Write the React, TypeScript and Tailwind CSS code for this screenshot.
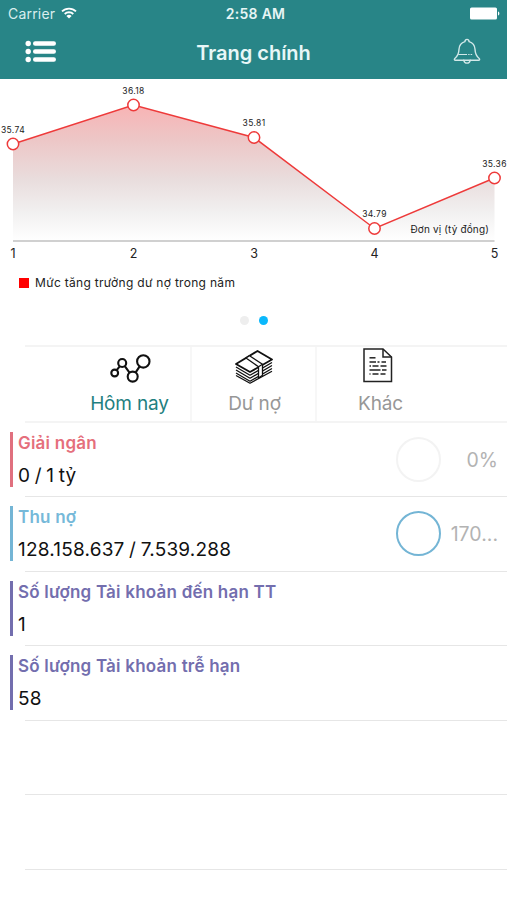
import type { ReactNode } from 'react';
import { clsx } from 'clsx';

const POINTS = [
  { x: 13, y: 65, label: '35.74' },
  { x: 133.5, y: 26, label: '36.18' },
  { x: 254, y: 58.5, label: '35.81' },
  { x: 374.5, y: 149.5, label: '34.79' },
  { x: 494.5, y: 99, label: '35.36' }
];

const BASELINE = 162;

type Row = {
  title: string;
  value: string;
  text: string;
  bar: string;
  ring?: string;
  percent?: string;
};

const ROWS: Row[] = [
  {
    title: 'Giải ngân',
    value: '0 / 1 tỷ',
    text: 'text-[#e56f7c]',
    bar: 'bg-[#e0707e]',
    ring: 'border-[#f3f3f3]',
    percent: '0%'
  },
  {
    title: 'Thu nợ',
    value: '128.158.637 / 7.539.288',
    text: 'text-[#76b9d9]',
    bar: 'bg-[#74b5d5]',
    ring: 'border-[#74b5d5]',
    percent: '170...'
  },
  {
    title: 'Số lượng Tài khoản đến hạn TT',
    value: '1',
    text: 'text-[#736eae]',
    bar: 'bg-[#736eae]'
  },
  {
    title: 'Số lượng Tài khoản trễ hạn',
    value: '58',
    text: 'text-[#736eae]',
    bar: 'bg-[#736eae]'
  }
];

function WifiIcon() {
  return (
    <svg width="16" height="12" viewBox="0 0 16 12" fill="none" stroke="white" strokeWidth="1.8" className="mb-[3px]">
      <path d="M1 4.4a10 10 0 0 1 14 0" />
      <path d="M3.7 7a6.2 6.2 0 0 1 8.6 0" />
      <path d="M8 11.5 5.4 8.9a3.8 3.8 0 0 1 5.2 0z" fill="white" stroke="none" />
    </svg>
  );
}

function BatteryIcon() {
  return (
    <svg width="30" height="13" viewBox="0 0 30 13" fill="white" className="mb-[2px]">
      <rect x="0" y="0.5" width="27" height="12" rx="1.6" />
      <path d="M28 4.5c1.8.4 1.8 3.6 0 4z" />
    </svg>
  );
}

function MenuIcon() {
  return (
    <svg width="32" height="24" viewBox="0 0 32 24" fill="white">
      {[3.5, 11.5, 19.5].map((y) => (
        <g key={y}>
          <circle cx="3.2" cy={y} r="2.7" />
          <rect x="8" y={y - 2.2} width="23" height="4.4" rx="2.2" />
        </g>
      ))}
    </svg>
  );
}

function BellIcon() {
  return (
    <svg
      width="28"
      height="27"
      viewBox="0 0 28 27"
      fill="none"
      stroke="#d3e9e9"
      strokeWidth="1.4"
      strokeLinecap="round"
      strokeLinejoin="round">
      <path d="M11.9 3.6c.3-3 3.9-3 4.2 0 3.5 1 5.7 3.7 5.9 7.7.2 4.7 1.2 7 4.2 9.2.8.8.4 1.7-.6 1.7H2.4c-1 0-1.4-.9-.6-1.7 3-2.200 4-4.500 4.200-9.200.2-4 2.400-6.700 5.900-7.700z" />
      <path d="M10.800 22.300c.8 3.800 5.600 3.800 6.400 0" />
      <path d="M5.700 16.500h8M15.600 16.500h.6M18 16.500h.8" strokeWidth="1" />
    </svg>
  );
}

function NodesIcon() {
  return (
    <svg
      width="42"
      height="30"
      viewBox="0 0 42 30"
      fill="none"
      stroke="#111"
      strokeWidth="2.1"
      className="ml-[3px] mt-[2px]">
      <circle cx="5.7" cy="20" r="3.4" />
      <circle cx="13.2" cy="10" r="4" />
      <circle cx="23.7" cy="23.6" r="5" />
      <circle cx="34.3" cy="8.4" r="6.2" />
      <path d="m7.700 17.100 3-3.800M15.800 13.200l4.700 6.400M26.700 19.400l3.800-5.800" />
    </svg>
  );
}

function MoneyIcon() {
  return (
    <svg
      width="38"
      height="34"
      viewBox="0 0 38 34"
      fill="none"
      stroke="#111"
      strokeWidth="1.3"
      strokeLinejoin="round"
      className="mb-px">
      <path d="m1 17 14 8.200 22-12.700M1 20l14 8.200 22-12.700M1 23l14 8.200 22-12.700M1 25.500l14 7.700 22-12" />
      <path d="M1 14 22.500 1 37 9.500 15 22z" fill="white" strokeWidth="1.8" />
      <path d="m11 8 3.500-2.200 13 8.500v11L23.500 28V16.800z" fill="white" />
      <path d="M23.500 16.800l4-2.500" />
    </svg>
  );
}

function DocumentIcon() {
  return (
    <svg
      width="30"
      height="35"
      viewBox="0 0 30 35"
      fill="none"
      stroke="#222"
      strokeWidth="1.5"
      className="mb-[3px] mr-[3px]">
      <path d="M1 1h19l8.500 8v24.500H1z" />
      <path d="M20 1v8h8.500" />
      <path d="M6.500 9.800h6" />
      <path d="M6.500 14h6.500M14.500 14h2M18.500 14h4.500" />
      <path d="M6.500 18h1.500M9.500 18h6M17.500 18h6" />
      <path d="M6.500 22h11M19 22h4.500" />
      <path d="M6.500 26h1M9.500 26h6M17.500 26h5" />
    </svg>
  );
}

function Header() {
  return (
    <header className="h-[79px] bg-[#288587] text-white">
      <div className="grid h-7 grid-cols-3 items-center pl-2 pr-[7px]">
        <div className="flex items-center gap-1.5">
          <span className="pb-px text-[14px] leading-4 tracking-[0.2px] text-[#d9eeee]">Carrier</span>
          <WifiIcon />
        </div>
        <span className="pb-px pl-[3px] text-center text-[14px] font-semibold tracking-[0.3px] text-[#e6f5f5]">
          2:58 AM
        </span>
        <div className="flex justify-end">
          <BatteryIcon />
        </div>
      </div>
      <div className="grid h-[47px] grid-cols-3 items-center pl-[25px] pr-[26px]">
        <MenuIcon />
        <h1 className="pt-[2px] pl-px text-center text-[20px] font-semibold whitespace-nowrap text-[#e8f7f7]">
          Trang chính
        </h1>
        <div className="flex justify-end">
          <BellIcon />
        </div>
      </div>
    </header>
  );
}

function Chart() {
  const line = POINTS.map((p) => `${p.x},${p.y}`).join(' ');
  return (
    <svg width="507" height="190" viewBox="0 0 507 190" className="block">
      <defs>
        <linearGradient id="area" x1="0" y1="0" x2="0" y2="1">
          <stop offset="0" stopColor="#f8b3b4" />
          <stop offset="0.25" stopColor="#edc6c6" />
          <stop offset="0.55" stopColor="#e9dddd" />
          <stop offset="0.8" stopColor="#f2f1f1" />
          <stop offset="1" stopColor="#ffffff" />
        </linearGradient>
      </defs>
      <polygon points={`13,${BASELINE} ${line} 494.5,${BASELINE}`} fill="url(#area)" />
      <path d={`M13 ${BASELINE}H494.5`} stroke="#d0d0d0" strokeWidth="1.8" />
      <polyline points={line} fill="none" stroke="#ee3a3a" strokeWidth="1.4" />
      {POINTS.map((p, i) => (
        <g key={p.label} textAnchor="middle" fill="#222">
          <circle cx={p.x} cy={p.y} r="5.7" fill="white" stroke="#ee3a3a" strokeWidth="1.5" />
          <text x={p.x} y={p.y - 11.5} fontSize="8.5" letterSpacing="0.35">
            {p.label}
          </text>
          <text x={p.x} y="179" fontSize="12.5">
            {i + 1}
          </text>
        </g>
      ))}
      <text x="489" y="153.5" textAnchor="end" fontSize="10" letterSpacing="0.15" fill="#222">
        Đơn vị (tỷ đồng)
      </text>
    </svg>
  );
}

function Tab({ label, icon, active }: { label: string; icon: ReactNode; active?: boolean }) {
  return (
    <button className="flex w-[125px] flex-col items-center border-r-2 border-[#f7f7f7] pt-px last:border-r-0">
      <span className="flex h-[38px] items-center justify-center">{icon}</span>
      <span
        className={clsx(
          'pl-[2px] pt-1 text-[19px] leading-7 tracking-[-0.15px]',
          active ? 'text-[#1f8080]' : 'text-[#979797]'
        )}>
        {label}
      </span>
    </button>
  );
}

function StatRow({ row }: { row: Row }) {
  return (
    <div className="flex h-[74.5px] flex-col">
      <div className="flex flex-1 items-center pl-[10px] pr-[9px]">
        <div className={clsx('h-[55px] w-[3px]', row.bar)} />
        <div className="flex-1 pl-[5px] whitespace-nowrap">
          <div className={clsx('text-[17px] leading-6 font-semibold tracking-[0.22px]', row.text)}>{row.title}</div>
          <div className="pt-[9px] text-[19px] leading-6 tracking-[0.2px] text-[#111] [word-spacing:-1px]">
            {row.value}
          </div>
        </div>
        {row.ring && <div className={clsx('size-[45px] rounded-full border-2', row.ring)} />}
        {row.percent && (
          <div className="w-[57px] pt-[2px] text-right text-[19.5px] text-[#b3b3b3]">{row.percent}</div>
        )}
      </div>
      <div className="ml-[25px] h-px bg-[#e6e6e6]" />
    </div>
  );
}

export default function App() {
  return (
    <main className="h-[900px] w-[507px] overflow-hidden bg-white font-['Inter',sans-serif]">
      <Header />
      <Chart />
      <div className="flex h-7 items-center gap-1.5 pl-[19px] text-[12px] tracking-[0.3px] text-[#222]">
        <span className="size-[10px] bg-[#ff0000]" />
        <span>Mức tăng trưởng dư nợ trong năm</span>
      </div>
      <div className="flex h-12 items-center justify-center gap-[10px] pb-px">
        <span className="size-[9px] rounded-full bg-[#eeeeee]" />
        <span className="size-[9px] rounded-full bg-[#0ab8fc]" />
      </div>
      <div className="ml-[25px] flex h-[77.5px] border-y-2 border-[#f4f4f4] pl-[42px]">
        <Tab label="Hôm nay" icon={<NodesIcon />} active />
        <Tab label="Dư nợ" icon={<MoneyIcon />} />
        <Tab label="Khác" icon={<DocumentIcon />} />
      </div>
      {ROWS.map((row) => (
        <StatRow key={row.title} row={row} />
      ))}
      <div className="ml-[25px] h-[74.5px] border-b border-[#e6e6e6]" />
      <div className="ml-[25px] h-[74.5px] border-b border-[#e6e6e6]" />
    </main>
  );
}
